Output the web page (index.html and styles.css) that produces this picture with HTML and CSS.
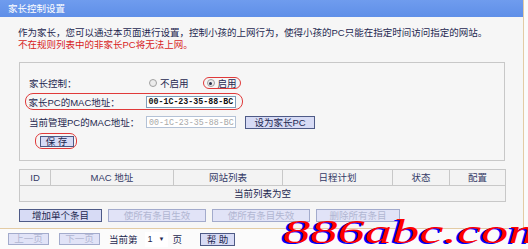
FILE: index.html
```html
<!DOCTYPE html>
<html lang="zh-CN">
<head>
<meta charset="UTF-8">
<title>家长控制设置</title>
<link rel="stylesheet" href="styles.css">
</head>
<body>
<div class="page">
  <div class="title">家长控制设置</div>
  <div class="intro">
    <p>作为家长，您可以通过本页面进行设置，控制小孩的上网行为，使得小孩的PC只能在指定时间访问指定的网站。</p>
    <p class="warn">不在规则列表中的非家长PC将无法上网。</p>
  </div>

  <div class="box">
    <div class="row r1">
      <span class="label">家长控制：</span>
      <span class="radio first"><i class="dot"></i>不启用</span>
      <span class="radio ring"><i class="dot on"></i>启用</span>
    </div>
    <div class="row r2 ring-row">
      <span class="label">家长PC的MAC地址：</span>
      <span class="input">00-1C-23-35-88-BC</span>
    </div>
    <div class="row r3">
      <span class="label">当前管理PC的MAC地址：</span>
      <span class="input off">00-1C-23-35-88-BC</span>
      <button class="btn setpc">设为家长PC</button>
    </div>
    <div class="row r4">
      <span class="ring-btn"><button class="btn save">保 存</button></span>
    </div>
  </div>

  <table class="rules">
    <colgroup>
      <col style="width:31px">
      <col style="width:123px">
      <col style="width:109px">
      <col style="width:110px">
      <col style="width:57px">
      <col style="width:56px">
    </colgroup>
    <tr class="head">
      <td>ID</td>
      <td>MAC 地址</td>
      <td>网站列表</td>
      <td>日程计划</td>
      <td>状态</td>
      <td>配置</td>
    </tr>
    <tr>
      <td colspan="6">当前列表为空</td>
    </tr>
  </table>

  <div class="actions">
    <button class="btn add">增加单个条目</button>
    <button class="btn off wide">使所有条目生效</button>
    <button class="btn off wide">使所有条目失效</button>
    <button class="btn off del">删除所有条目</button>
  </div>
</div>

<div class="footer">
  <button class="btn off page-btn">上一页</button>
  <button class="btn off page-btn next">下一页</button>
  <span class="cur">当前第</span>
  <span class="select">1<i>▼</i></span>
  <span class="ye">页</span>
  <button class="btn help">帮 助</button>
</div>

<div class="watermark">886abc.com</div>
</body>
</html>
```

FILE: styles.css
```css
* { margin: 0; padding: 0; box-sizing: border-box; }
body {
  font: 9.5px "Liberation Sans", "Noto Sans CJK SC", sans-serif;
  color: #1e2850;
  background: #fbfbfb;
  width: 528px;
  height: 249px;
  overflow: hidden;
  position: relative;
}

/* 主面板 */
.page {
  width: 524px;
  background: #f6f6f6;
  border-right: 1px solid #e3cba4;
  border-bottom: 1px solid #e3cba4;
  padding-bottom: 6px;
}
.title {
  height: 17px;
  line-height: 17px;
  background: linear-gradient(#6f9cee, #5f8fe8);
  color: #fff;
  padding-left: 8px;
}
.intro { padding: 10px 0 0 18px; line-height: 12px; }
.warn { color: #d81e1e; }

/* 设置框 */
.box {
  margin: 11px 0 0 19px;
  width: 486px;
  height: 99px;
  border: 1px solid #c8c8c8;
  padding: 10px 0 0 9px;
}
.row { display: flex; align-items: center; }
.r1 { height: 20px; }
.r2 { height: 17px; margin-bottom: 2px; }
.r3 { height: 20px; }
.r4 { height: 16px; margin-top: 1px; }
.label { width: 117px; flex: none; }

.radio { display: inline-flex; align-items: center; height: 12px; }
.radio.first { margin-left: 3px; }
.radio.ring {
  margin-left: 14px;
  padding: 0 3px 0 3px;
  border: 1.5px solid #e03a3a;
  border-radius: 7px;
}
.dot {
  width: 8px;
  height: 8px;
  border-radius: 50%;
  border: 1px solid #a0a0a0;
  background: #ececec;
  margin-right: 3px;
  position: relative;
}
.dot.on::after {
  content: "";
  position: absolute;
  left: 1.5px;
  top: 1.5px;
  width: 3px;
  height: 3px;
  border-radius: 50%;
  background: #2a3048;
}

/* 红框标注 */
.ring-row {
  margin-left: -4px;
  width: 218px;
  padding-left: 2.5px;
  border: 1.5px solid #e03a3a;
  border-radius: 8px;
}
.ring-btn {
  margin-left: 6px;
  width: 42px;
  height: 16px;
  border: 1.5px solid #e03a3a;
  border-radius: 7px;
  display: flex;
  align-items: center;
  padding-left: 3.5px;
}

.input {
  width: 90px;
  height: 12px;
  border: 1px solid #7f9db9;
  background: #fff;
  padding-left: 2px;
  font: bold 8.3px "Liberation Mono", monospace;
  color: #111;
  display: flex;
  align-items: center;
}
.input.off { border-color: #b4c2d6; color: #a8a8a8; font-weight: normal; }

/* 按钮 */
.btn {
  font: inherit;
  color: #1e2850;
  height: 13px;
  line-height: 11px;
  background: #d7dbf5;
  border: 1px solid #4e5a86;
  padding: 0;
}
.btn.off { background: #e1e3f7; border-color: #a3abcc; color: #b1b6d2; }
.setpc { width: 70px; margin-left: 9px; }
.save { width: 34px; height: 11px; line-height: 9px; }

/* 规则表 */
.rules {
  margin: 8px 0 0 19px;
  width: 486px;
  border-collapse: collapse;
  table-layout: fixed;
  background: #f3f3f3;
}
.rules td {
  height: 16px;
  border: 1px solid #c8c8c8;
  text-align: center;
  line-height: 14px;
}
.rules .head td { color: #333a66; }

.actions { display: flex; gap: 6px; margin: 7px 0 0 19px; }
.add { width: 83px; }
.wide { width: 98px; }
.del { width: 84px; }

/* 底部翻页 */
.footer { display: flex; align-items: center; height: 20px; padding-left: 8px; }
.page-btn { width: 41px; height: 12px; line-height: 10px; }
.next { margin-left: 10px; }
.cur { margin-left: 9px; }
.select {
  margin-left: 7px;
  width: 23px;
  height: 15px;
  background: #fff;
  display: flex;
  align-items: center;
  padding-left: 3px;
  font-size: 9px;
}
.select i { font-style: normal; font-size: 6px; margin-left: 6px; }
.ye { margin-left: 5px; }
.help { width: 35px; margin-left: 18px; }

/* 水印 */
.watermark {
  position: absolute;
  left: 283px;
  top: 216px;
  font: italic 33px "Liberation Serif", serif;
  line-height: 33px;
  color: #ff0000;
  text-shadow: -1.5px 1px 0 #0000ff;
  white-space: nowrap;
  transform: scaleX(1.65);
  transform-origin: left center;
}
```
